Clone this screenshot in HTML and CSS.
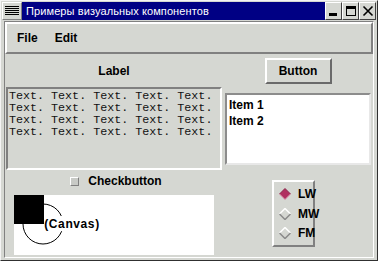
FILE: index.html
```html
<html>
<head>
<link rel="stylesheet" href="styles.css">
</head>
<body>
<div class="window">
  <div class="titlebar">
    <div class="sysicon"><div class="lines"></div></div>
    <div class="title">Примеры визуальных компонентов</div>
    <div class="wbtn">
      <svg width="12" height="12"><rect x="1" y="8" width="8" height="3" fill="#000"/></svg>
    </div>
    <div class="wbtn">
      <svg width="12" height="12"><rect x="1.5" y="1.5" width="9" height="9" fill="none" stroke="#000"/><rect x="1" y="1" width="10" height="3" fill="#000"/></svg>
    </div>
    <div class="wbtn">
      <svg width="12" height="12"><path d="M1.5 1.5 L10.5 10.5 M10.5 1.5 L1.5 10.5" stroke="#000" stroke-width="1.6"/></svg>
    </div>
  </div>
  <div class="client">
    <div class="menubar">
      <span class="menu">File</span>
      <span class="menu">Edit</span>
    </div>
    <div class="content">
      <div class="label">Label</div>
      <div class="btncell"><div class="button">Button</div></div>

      <div class="textbox">Text. Text. Text. Text. Text.
Text. Text. Text. Text. Text.
Text. Text. Text. Text. Text.
Text. Text. Text. Text. Text.</div>
      <div class="listcell">
        <div class="listbox">
          <div class="item">Item 1</div>
          <div class="item">Item 2</div>
        </div>
      </div>

      <div class="check"><span class="checkbox"></span>Checkbutton</div>
      <div class="radiocell">
        <div class="radios">
          <div class="radio">
            <svg width="12" height="12"><polygon points="6,0.5 11.5,6 6,11.5 0.5,6" fill="#b03060"/><polyline points="0.5,6 6,0.5 11.5,6" fill="none" stroke="#8a2448"/><polyline points="0.5,6 6,11.5 11.5,6" fill="none" stroke="#d890a8"/></svg>
            LW
          </div>
          <div class="radio">
            <svg width="12" height="12"><polyline points="0.5,6 6,0.5 11.5,6" fill="none" stroke="#ffffff" stroke-width="1.5"/><polyline points="0.5,6 6,11.5 11.5,6" fill="none" stroke="#8a8a8a" stroke-width="1.5"/></svg>
            MW
          </div>
          <div class="radio">
            <svg width="12" height="12"><polyline points="0.5,6 6,0.5 11.5,6" fill="none" stroke="#ffffff" stroke-width="1.5"/><polyline points="0.5,6 6,11.5 11.5,6" fill="none" stroke="#8a8a8a" stroke-width="1.5"/></svg>
            FM
          </div>
        </div>
      </div>
      <div class="canvascell">
        <svg class="canvas" width="200" height="60">
          <rect x="0" y="0" width="200" height="60" fill="#fff"/>
          <rect x="0" y="0" width="30" height="29" fill="#000"/>
          <circle cx="29" cy="29" r="20" fill="none" stroke="#000" stroke-width="1"/>
          <rect x="32" y="21" width="54" height="15" fill="#fff"/>
          <text x="58" y="33" text-anchor="middle" class="ctext">(Canvas)</text>
        </svg>
      </div>
    </div>
  </div>
</div>
</body>
</html>
```

FILE: styles.css
```css
:root {
  --bg: #d5d7d2;
  --navy: #000084;
  --dark: #808080;
  --light: #ffffff;
}

body {
  margin: 0;
  background: var(--bg);
  font-family: "Liberation Sans", Arial, sans-serif;
}

.window {
  width: 378px;
  height: 261px;
  box-sizing: border-box;
  border: 1px solid;
  border-color: #f4f4f4 #303030 #303030 #f4f4f4;
  padding: 1px 1px 2px 1px;
  display: flex;
  flex-direction: column;
  background: var(--bg);
}

.titlebar {
  height: 18px;
  display: flex;
  background: var(--navy);
}

.sysicon {
  width: 20px;
  height: 18px;
  box-sizing: border-box;
  background: var(--bg);
  border: 1px solid;
  border-color: var(--light) var(--dark) var(--dark) var(--light);
  padding: 3px 2px;
}

.sysicon .lines {
  height: 10px;
  background: repeating-linear-gradient(#000 0 1px, var(--bg) 1px 2px);
}

.title {
  flex: 1;
  color: #fff;
  font-size: 11px;
  letter-spacing: 0.1px;
  line-height: 18px;
  padding-left: 4px;
  white-space: nowrap;
  overflow: hidden;
}

.wbtn {
  width: 17px;
  height: 18px;
  box-sizing: border-box;
  background: var(--bg);
  border: 1px solid;
  border-color: var(--light) #404040 #404040 var(--light);
  display: flex;
  align-items: center;
  justify-content: center;
}

.client {
  flex: 1;
  margin: 1px 2px 0 2px;
  border: 1px solid;
  border-color: var(--dark) var(--light) var(--light) var(--dark);
  display: flex;
  flex-direction: column;
}

.menubar {
  height: 32px;
  flex-shrink: 0;
  box-sizing: border-box;
  border: 2px solid;
  border-color: var(--light) var(--dark) var(--dark) var(--light);
  display: flex;
  align-items: center;
  padding-left: 10px;
  gap: 17px;
}

.menu {
  font-size: 12px;
  font-weight: bold;
}

.content {
  flex: 1;
  display: grid;
  grid-template-columns: 216px 146px;
  grid-template-rows: 33px 83px 22px 1fr;
  column-gap: 3px;
  padding: 0 0 0 1px;
}

.label {
  font-size: 12px;
  font-weight: bold;
  display: flex;
  align-items: center;
  justify-content: center;
}

.btncell,
.listcell,
.radiocell,
.canvascell {
  display: flex;
  align-items: center;
  justify-content: center;
}

.button {
  width: 67px;
  height: 26px;
  box-sizing: border-box;
  border: 2px solid;
  border-color: var(--light) #6a6a6a #6a6a6a var(--light);
  font-size: 12px;
  font-weight: bold;
  display: flex;
  align-items: center;
  justify-content: center;
}

.textbox {
  box-sizing: border-box;
  border: 2px solid;
  border-color: var(--dark) var(--light) var(--light) var(--dark);
  font-family: "Liberation Mono", "Courier New", monospace;
  font-size: 11.7px;
  line-height: 12px;
  white-space: pre;
  padding: 1px 0 0 1px;
  color: #111;
  overflow: hidden;
}

.listbox {
  width: 146px;
  height: 72px;
  box-sizing: border-box;
  background: #fff;
  border: 2px solid;
  border-color: #8c8c8c #e8e8e8 #e8e8e8 #8c8c8c;
  padding: 2px 2px;
}

.item {
  font-size: 12px;
  font-weight: bold;
  line-height: 16px;
}

.check {
  display: flex;
  align-items: center;
  justify-content: center;
  font-size: 12px;
  font-weight: bold;
  gap: 9px;
  padding-left: 4px;
}

.checkbox {
  width: 9px;
  height: 9px;
  box-sizing: border-box;
  background: #c8cac6;
  border: 1px solid;
  border-color: var(--light) var(--dark) var(--dark) var(--light);
}

.radiocell {
  grid-row: 3 / 5;
  grid-column: 2;
  padding-right: 9px;
}

.radios {
  width: 43px;
  height: 67px;
  box-sizing: border-box;
  border: 2px solid;
  border-color: var(--light) var(--dark) var(--dark) var(--light);
  display: flex;
  flex-direction: column;
  justify-content: space-evenly;
  padding-left: 5px;
}

.radio {
  display: flex;
  align-items: center;
  gap: 7px;
  font-size: 12px;
  font-weight: bold;
}

.radio svg {
  flex-shrink: 0;
}

.canvascell {
  grid-row: 4;
  grid-column: 1;
}

.canvas {
  display: block;
}

.ctext {
  font-family: "Liberation Sans", Arial, sans-serif;
  font-size: 12px;
  font-weight: bold;
  letter-spacing: 0.6px;
}
```
